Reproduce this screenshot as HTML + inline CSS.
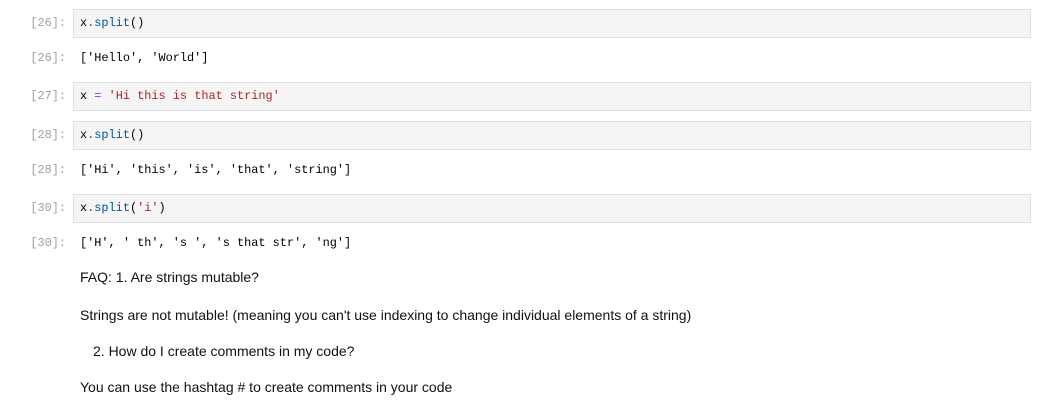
<!DOCTYPE html><html><head><style>
body{margin:0;background:#fff;width:1040px;height:401px;overflow:hidden;position:relative;font-family:"Liberation Sans",sans-serif}
.p{position:absolute;left:0;width:66px;text-align:right;font:11.9px "Liberation Mono",monospace;color:#a0a0a0}
.box{position:absolute;left:73px;width:956px;height:27px;background:#f5f5f5;border:1px solid #e0e0e0}
.c{position:absolute;left:80px;font:11.9px "Liberation Mono",monospace;color:#000;white-space:pre}
.m{position:absolute;left:80px;font-size:14px;color:#111;white-space:pre}
.b{color:#0055aa}.s{color:#ba2121}.o{color:#aa22ff}
</style></head><body>
<div class="box" style="top:9px"></div>
<div class="p" style="top:16px">[26]:</div><div class="c" style="top:16px">x<span class="b">.split</span>()</div>
<div class="p" style="top:51px">[26]:</div><div class="c" style="top:51px">['Hello', 'World']</div>
<div class="box" style="top:82px"></div>
<div class="p" style="top:89px">[27]:</div><div class="c" style="top:89px">x <span class="o">=</span> <span class="s">'Hi this is that string'</span></div>
<div class="box" style="top:121px"></div>
<div class="p" style="top:128px">[28]:</div><div class="c" style="top:128px">x<span class="b">.split</span>()</div>
<div class="p" style="top:163px">[28]:</div><div class="c" style="top:163px">['Hi', 'this', 'is', 'that', 'string']</div>
<div class="box" style="top:194px"></div>
<div class="p" style="top:201px">[30]:</div><div class="c" style="top:201px">x<span class="b">.split</span>(<span class="s">'i'</span>)</div>
<div class="p" style="top:236px">[30]:</div><div class="c" style="top:236px">['H', ' th', 's ', 's that str', 'ng']</div>
<div class="m" style="top:269px">FAQ: 1. Are strings mutable?</div>
<div class="m" style="top:307px">Strings are not mutable! (meaning you can't use indexing to change individual elements of a string)</div>
<div class="m" style="top:343px;left:93px">2. How do I create comments in my code?</div>
<div class="m" style="top:379px">You can use the hashtag # to create comments in your code</div>
</body></html>
